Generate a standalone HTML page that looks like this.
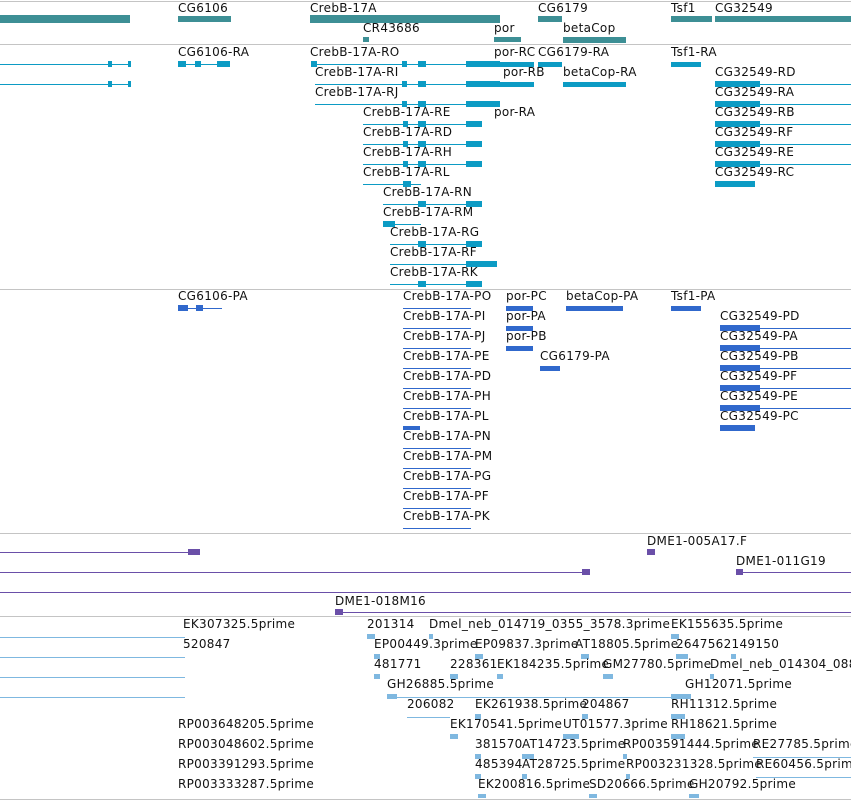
<!DOCTYPE html>
<html><head><meta charset="utf-8"><style>
body{margin:0;width:851px;height:801px;overflow:hidden;background:#fff;position:relative;font-family:"DejaVu Sans","Liberation Sans",sans-serif;}
span{position:absolute;font-size:12px;line-height:14px;color:#111;letter-spacing:0.3px;white-space:nowrap}
i{position:absolute;display:block}
.g{height:1px;background:#c4c4c4;left:0;width:851px}
.a{background:#3d8f95}.c{background:#0c9bc4}.d{background:#3068cc}.p{background:#6a4fa8}.e{background:#7fb8e0}
</style></head><body>
<i class="g" style="top:1px"></i><i class="g" style="top:44px"></i><i class="g" style="top:289px"></i><i class="g" style="top:533px"></i><i class="g" style="top:616px"></i><i class="g" style="top:799px"></i>

<!-- track 1 -->
<i class="a" style="left:0;width:130px;top:15px;height:8px"></i>
<span style="left:178px;top:1px">CG6106</span><i class="a" style="left:178px;width:53px;top:16px;height:6px"></i>
<span style="left:310px;top:1px">CrebB-17A</span><i class="a" style="left:310px;width:190px;top:15px;height:8px"></i>
<span style="left:363px;top:21px">CR43686</span><i class="a" style="left:363px;width:6px;top:37px;height:5px"></i>
<span style="left:494px;top:21px">por</span><i class="a" style="left:494px;width:27px;top:37px;height:5px"></i>
<span style="left:538px;top:1px">CG6179</span><i class="a" style="left:538px;width:24px;top:16px;height:6px"></i>
<span style="left:563px;top:21px">betaCop</span><i class="a" style="left:563px;width:63px;top:37px;height:6px"></i>
<span style="left:671px;top:1px">Tsf1</span><i class="a" style="left:671px;width:41px;top:16px;height:6px"></i>
<span style="left:715px;top:1px">CG32549</span><i class="a" style="left:715px;width:136px;top:16px;height:6px"></i>

<!-- track 2 -->
<i class="c" style="left:0;width:131px;top:64px;height:1px"></i><i class="c" style="left:108px;width:4px;top:61px;height:6px"></i><i class="c" style="left:128px;width:3px;top:61px;height:6px"></i>
<i class="c" style="left:0;width:131px;top:84px;height:1px"></i><i class="c" style="left:108px;width:4px;top:81px;height:6px"></i><i class="c" style="left:128px;width:3px;top:81px;height:6px"></i>
<span style="left:178px;top:45px">CG6106-RA</span><i class="c" style="left:178px;width:52px;top:64px;height:1px"></i><i class="c" style="left:178px;width:8px;top:61px;height:6px"></i><i class="c" style="left:195px;width:6px;top:61px;height:6px"></i><i class="c" style="left:217px;width:13px;top:61px;height:6px"></i>
<span style="left:310px;top:45px">CrebB-17A-RO</span>
<span style="left:315px;top:65px">CrebB-17A-RI</span>
<span style="left:315px;top:85px">CrebB-17A-RJ</span>
<span style="left:363px;top:105px">CrebB-17A-RE</span>
<span style="left:363px;top:125px">CrebB-17A-RD</span>
<span style="left:363px;top:145px">CrebB-17A-RH</span>
<span style="left:363px;top:165px">CrebB-17A-RL</span>
<span style="left:383px;top:185px">CrebB-17A-RN</span>
<span style="left:383px;top:205px">CrebB-17A-RM</span>
<span style="left:390px;top:225px">CrebB-17A-RG</span>
<span style="left:390px;top:245px">CrebB-17A-RF</span>
<span style="left:390px;top:265px">CrebB-17A-RK</span>
<i class="c" style="left:311px;width:170px;top:64px;height:1px"></i><i class="c" style="left:466px;width:34px;top:61px;height:6px"></i><i class="c" style="left:311px;width:6px;top:61px;height:6px"></i><i class="c" style="left:402px;width:5px;top:61px;height:6px"></i><i class="c" style="left:418px;width:8px;top:61px;height:6px"></i>
<i class="c" style="left:315px;width:185px;top:84px;height:1px"></i><i class="c" style="left:466px;width:34px;top:81px;height:6px"></i><i class="c" style="left:402px;width:5px;top:81px;height:6px"></i><i class="c" style="left:418px;width:8px;top:81px;height:6px"></i>
<i class="c" style="left:315px;width:185px;top:104px;height:1px"></i><i class="c" style="left:466px;width:34px;top:101px;height:6px"></i><i class="c" style="left:402px;width:5px;top:101px;height:6px"></i><i class="c" style="left:418px;width:8px;top:101px;height:6px"></i>
<i class="c" style="left:363px;width:119px;top:124px;height:1px"></i><i class="c" style="left:466px;width:16px;top:121px;height:6px"></i><i class="c" style="left:403px;width:5px;top:121px;height:6px"></i><i class="c" style="left:418px;width:8px;top:121px;height:6px"></i>
<i class="c" style="left:363px;width:119px;top:144px;height:1px"></i><i class="c" style="left:466px;width:16px;top:141px;height:6px"></i><i class="c" style="left:403px;width:5px;top:141px;height:6px"></i><i class="c" style="left:418px;width:8px;top:141px;height:6px"></i>
<i class="c" style="left:363px;width:119px;top:164px;height:1px"></i><i class="c" style="left:466px;width:16px;top:161px;height:6px"></i><i class="c" style="left:403px;width:5px;top:161px;height:6px"></i><i class="c" style="left:418px;width:8px;top:161px;height:6px"></i>
<i class="c" style="left:363px;width:58px;top:184px;height:1px"></i><i class="c" style="left:403px;width:8px;top:181px;height:6px"></i>
<i class="c" style="left:383px;width:99px;top:204px;height:1px"></i><i class="c" style="left:466px;width:16px;top:201px;height:6px"></i><i class="c" style="left:418px;width:8px;top:201px;height:6px"></i>
<i class="c" style="left:383px;width:38px;top:224px;height:1px"></i><i class="c" style="left:383px;width:12px;top:221px;height:6px"></i>
<i class="c" style="left:390px;width:92px;top:244px;height:1px"></i><i class="c" style="left:466px;width:16px;top:241px;height:6px"></i><i class="c" style="left:418px;width:8px;top:241px;height:6px"></i>
<i class="c" style="left:390px;width:107px;top:264px;height:1px"></i><i class="c" style="left:466px;width:31px;top:261px;height:6px"></i>
<i class="c" style="left:390px;width:92px;top:284px;height:1px"></i><i class="c" style="left:466px;width:16px;top:281px;height:6px"></i><i class="c" style="left:418px;width:8px;top:281px;height:6px"></i>
<span style="left:494px;top:45px">por-RC</span><i class="c" style="left:494px;width:40px;top:62px;height:5px"></i>
<span style="left:538px;top:45px">CG6179-RA</span><i class="c" style="left:538px;width:24px;top:62px;height:5px"></i>
<span style="left:503px;top:65px">por-RB</span><i class="c" style="left:480px;width:54px;top:82px;height:5px"></i>
<span style="left:494px;top:105px">por-RA</span>
<span style="left:563px;top:65px">betaCop-RA</span><i class="c" style="left:563px;width:63px;top:82px;height:5px"></i>
<span style="left:671px;top:45px">Tsf1-RA</span><i class="c" style="left:671px;width:30px;top:62px;height:5px"></i>
<span style="left:715px;top:65px">CG32549-RD</span><i class="c" style="left:715px;width:136px;top:84px;height:1px"></i><i class="c" style="left:715px;width:45px;top:81px;height:6px"></i>
<span style="left:715px;top:85px">CG32549-RA</span><i class="c" style="left:715px;width:136px;top:104px;height:1px"></i><i class="c" style="left:715px;width:45px;top:101px;height:6px"></i>
<span style="left:715px;top:105px">CG32549-RB</span><i class="c" style="left:715px;width:136px;top:124px;height:1px"></i><i class="c" style="left:715px;width:45px;top:121px;height:6px"></i>
<span style="left:715px;top:125px">CG32549-RF</span><i class="c" style="left:715px;width:136px;top:144px;height:1px"></i><i class="c" style="left:715px;width:45px;top:141px;height:6px"></i>
<span style="left:715px;top:145px">CG32549-RE</span><i class="c" style="left:715px;width:136px;top:164px;height:1px"></i><i class="c" style="left:715px;width:45px;top:161px;height:6px"></i>
<span style="left:715px;top:165px">CG32549-RC</span><i class="c" style="left:715px;width:40px;top:181px;height:6px"></i>

<!-- track 3 -->
<span style="left:178px;top:289px">CG6106-PA</span><i class="d" style="left:178px;width:44px;top:308px;height:1px"></i><i class="d" style="left:178px;width:10px;top:305px;height:6px"></i><i class="d" style="left:196px;width:7px;top:305px;height:6px"></i>
<span style="left:403px;top:289px">CrebB-17A-PO</span>
<span style="left:403px;top:309px">CrebB-17A-PI</span>
<span style="left:403px;top:329px">CrebB-17A-PJ</span>
<span style="left:403px;top:349px">CrebB-17A-PE</span>
<span style="left:403px;top:369px">CrebB-17A-PD</span>
<span style="left:403px;top:389px">CrebB-17A-PH</span>
<span style="left:403px;top:409px">CrebB-17A-PL</span>
<span style="left:403px;top:429px">CrebB-17A-PN</span>
<span style="left:403px;top:449px">CrebB-17A-PM</span>
<span style="left:403px;top:469px">CrebB-17A-PG</span>
<span style="left:403px;top:489px">CrebB-17A-PF</span>
<span style="left:403px;top:509px">CrebB-17A-PK</span>
<i class="d" style="left:403px;width:68px;top:308px;height:1px"></i><i class="d" style="left:403px;width:68px;top:328px;height:1px"></i><i class="d" style="left:403px;width:68px;top:348px;height:1px"></i><i class="d" style="left:403px;width:68px;top:368px;height:1px"></i><i class="d" style="left:403px;width:68px;top:388px;height:1px"></i><i class="d" style="left:403px;width:68px;top:408px;height:1px"></i><i class="d" style="left:403px;width:17px;top:426px;height:4px"></i><i class="d" style="left:403px;width:68px;top:448px;height:1px"></i><i class="d" style="left:403px;width:68px;top:468px;height:1px"></i><i class="d" style="left:403px;width:68px;top:488px;height:1px"></i><i class="d" style="left:403px;width:68px;top:508px;height:1px"></i><i class="d" style="left:403px;width:68px;top:528px;height:1px"></i>
<span style="left:506px;top:289px">por-PC</span><i class="d" style="left:506px;width:27px;top:306px;height:5px"></i>
<span style="left:506px;top:309px">por-PA</span><i class="d" style="left:506px;width:27px;top:326px;height:5px"></i>
<span style="left:506px;top:329px">por-PB</span><i class="d" style="left:506px;width:27px;top:346px;height:5px"></i>
<span style="left:540px;top:349px">CG6179-PA</span><i class="d" style="left:540px;width:20px;top:366px;height:5px"></i>
<span style="left:566px;top:289px">betaCop-PA</span><i class="d" style="left:566px;width:57px;top:306px;height:5px"></i>
<span style="left:671px;top:289px">Tsf1-PA</span><i class="d" style="left:671px;width:30px;top:306px;height:5px"></i>
<span style="left:720px;top:309px">CG32549-PD</span><i class="d" style="left:720px;width:131px;top:328px;height:1px"></i><i class="d" style="left:720px;width:40px;top:325px;height:6px"></i>
<span style="left:720px;top:329px">CG32549-PA</span><i class="d" style="left:720px;width:131px;top:348px;height:1px"></i><i class="d" style="left:720px;width:40px;top:345px;height:6px"></i>
<span style="left:720px;top:349px">CG32549-PB</span><i class="d" style="left:720px;width:131px;top:368px;height:1px"></i><i class="d" style="left:720px;width:40px;top:365px;height:6px"></i>
<span style="left:720px;top:369px">CG32549-PF</span><i class="d" style="left:720px;width:131px;top:388px;height:1px"></i><i class="d" style="left:720px;width:40px;top:385px;height:6px"></i>
<span style="left:720px;top:389px">CG32549-PE</span><i class="d" style="left:720px;width:131px;top:408px;height:1px"></i><i class="d" style="left:720px;width:40px;top:405px;height:6px"></i>
<span style="left:720px;top:409px">CG32549-PC</span><i class="d" style="left:720px;width:35px;top:425px;height:6px"></i>

<!-- track 4 -->
<i class="p" style="left:0;width:200px;top:552px;height:1px"></i><i class="p" style="left:188px;width:12px;top:549px;height:6px"></i>
<i class="p" style="left:0;width:590px;top:572px;height:1px"></i><i class="p" style="left:582px;width:8px;top:569px;height:6px"></i>
<i class="p" style="left:0;width:851px;top:592px;height:1px"></i>
<i class="p" style="left:335px;width:516px;top:612px;height:1px"></i><i class="p" style="left:335px;width:8px;top:609px;height:6px"></i>
<span style="left:647px;top:534px">DME1-005A17.F</span><i class="p" style="left:647px;width:8px;top:549px;height:6px"></i>
<span style="left:736px;top:554px">DME1-011G19</span><i class="p" style="left:736px;width:115px;top:572px;height:1px"></i><i class="p" style="left:736px;width:7px;top:569px;height:6px"></i>
<span style="left:335px;top:594px">DME1-018M16</span>

<!-- track 5 -->
<i class="e" style="left:0;width:185px;top:637px;height:1px"></i><i class="e" style="left:0;width:185px;top:657px;height:1px"></i><i class="e" style="left:0;width:185px;top:677px;height:1px"></i><i class="e" style="left:0;width:185px;top:697px;height:1px"></i>
<i class="e" style="left:387px;width:293px;top:697px;height:1px"></i>
<i class="e" style="left:407px;width:43px;top:717px;height:1px"></i>
<i class="e" style="left:753px;width:98px;top:757px;height:1px"></i>
<i class="e" style="left:756px;width:95px;top:777px;height:1px"></i>
<span style="left:183px;top:617px">EK307325.5prime</span>
<span style="left:367px;top:617px">201314</span><i class="e" style="left:367px;width:8px;top:634px;height:5px"></i>
<span style="left:429px;top:617px">Dmel_neb_014719_0355_3578.3prime</span><i class="e" style="left:429px;width:4px;top:634px;height:5px"></i>
<span style="left:671px;top:617px">EK155635.5prime</span><i class="e" style="left:671px;width:8px;top:634px;height:5px"></i>
<span style="left:183px;top:637px">520847</span>
<span style="left:374px;top:637px">EP00449.3prime</span><i class="e" style="left:374px;width:6px;top:654px;height:5px"></i>
<span style="left:475px;top:637px">EP09837.3prime</span><i class="e" style="left:475px;width:8px;top:654px;height:5px"></i>
<span style="left:575px;top:637px">AT18805.5prime</span><i class="e" style="left:581px;width:8px;top:654px;height:5px"></i>
<span style="left:676px;top:637px">2647562149150</span><i class="e" style="left:676px;width:12px;top:654px;height:5px"></i><i class="e" style="left:731px;width:5px;top:654px;height:5px"></i>
<span style="left:374px;top:657px">481771</span><i class="e" style="left:374px;width:6px;top:674px;height:5px"></i>
<span style="left:450px;top:657px">228361</span><i class="e" style="left:450px;width:8px;top:674px;height:5px"></i>
<span style="left:497px;top:657px">EK184235.5prime</span><i class="e" style="left:497px;width:6px;top:674px;height:5px"></i>
<span style="left:603px;top:657px">GM27780.5prime</span><i class="e" style="left:603px;width:10px;top:674px;height:5px"></i>
<span style="left:710px;top:657px">Dmel_neb_014304_088</span><i class="e" style="left:710px;width:4px;top:674px;height:5px"></i>
<span style="left:387px;top:677px">GH26885.5prime</span><i class="e" style="left:387px;width:10px;top:694px;height:5px"></i>
<span style="left:685px;top:677px">GH12071.5prime</span><i class="e" style="left:671px;width:20px;top:694px;height:5px"></i>
<span style="left:407px;top:697px">206082</span>
<span style="left:475px;top:697px">EK261938.5prime</span><i class="e" style="left:475px;width:6px;top:714px;height:5px"></i>
<span style="left:582px;top:697px">204867</span><i class="e" style="left:582px;width:6px;top:714px;height:5px"></i>
<span style="left:671px;top:697px">RH11312.5prime</span><i class="e" style="left:671px;width:14px;top:714px;height:5px"></i>
<span style="left:178px;top:717px">RP003648205.5prime</span>
<span style="left:450px;top:717px">EK170541.5prime</span><i class="e" style="left:450px;width:8px;top:734px;height:5px"></i>
<span style="left:563px;top:717px">UT01577.3prime</span><i class="e" style="left:563px;width:16px;top:734px;height:5px"></i>
<span style="left:671px;top:717px">RH18621.5prime</span><i class="e" style="left:671px;width:14px;top:734px;height:5px"></i>
<span style="left:178px;top:737px">RP003048602.5prime</span>
<span style="left:475px;top:737px">381570</span><i class="e" style="left:475px;width:6px;top:754px;height:5px"></i>
<span style="left:522px;top:737px">AT14723.5prime</span><i class="e" style="left:522px;width:12px;top:754px;height:5px"></i>
<span style="left:623px;top:737px">RP003591444.5prime</span><i class="e" style="left:623px;width:4px;top:754px;height:5px"></i>
<span style="left:753px;top:737px">RE27785.5prime</span>
<span style="left:178px;top:757px">RP003391293.5prime</span>
<span style="left:475px;top:757px">485394</span><i class="e" style="left:475px;width:6px;top:774px;height:5px"></i>
<span style="left:522px;top:757px">AT28725.5prime</span><i class="e" style="left:522px;width:5px;top:774px;height:5px"></i>
<span style="left:626px;top:757px">RP003231328.5prime</span><i class="e" style="left:626px;width:4px;top:774px;height:5px"></i>
<span style="left:756px;top:757px">RE60456.5prime</span>
<span style="left:178px;top:777px">RP003333287.5prime</span>
<span style="left:478px;top:777px">EK200816.5prime</span><i class="e" style="left:478px;width:8px;top:794px;height:4px"></i>
<span style="left:589px;top:777px">SD20666.5prime</span><i class="e" style="left:589px;width:8px;top:794px;height:4px"></i>
<span style="left:689px;top:777px">GH20792.5prime</span><i class="e" style="left:689px;width:10px;top:794px;height:4px"></i>
</body></html>
